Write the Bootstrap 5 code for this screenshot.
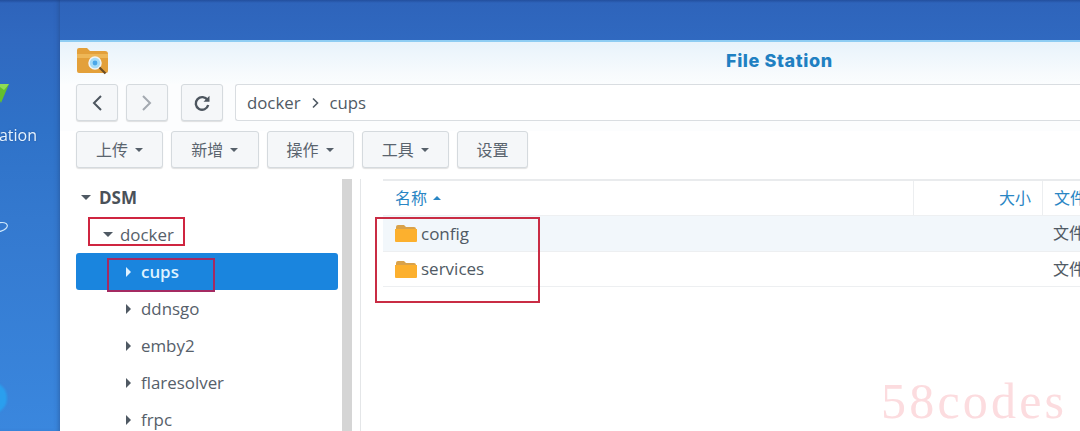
<!DOCTYPE html>
<html lang="zh">
<head>
<meta charset="utf-8">
<title>File Station</title>
<link href="https://cdn.jsdelivr.net/npm/bootstrap@5.3.0/dist/css/bootstrap.min.css" rel="stylesheet">
<style>
html,body{height:431px;overflow:hidden}
body{position:relative;background:linear-gradient(180deg,#234f9e 0,#2e64bb 3px,#3069c0 40px,#2f72c8 130px,#3479cf 220px,#3a87de 100%);font-family:"Open Sans","Noto Sans CJK SC",sans-serif;color:#4f5963;font-size:17px}
.soft-edge{filter:blur(.35px)}
.desk-strip{width:60px;flex:none;position:relative;overflow:hidden;box-shadow:inset -4px 0 5px -3px rgba(30,60,110,.45)}
.desk-label{position:absolute;right:23px;top:125px;color:#e6f3ff;font-size:16px;line-height:20px;white-space:nowrap;text-shadow:0 0 2px #1e4f96}
.desk-gem{position:absolute;left:-8px;top:81px}
.desk-oval{position:absolute;left:-8px;top:221px}
.desk-ball{position:absolute;left:-19px;top:383px;width:26px;height:30px;border-radius:50%;background:#2a9fee;filter:blur(1px)}
.win{margin-top:40px;flex:1;height:391px;background:#fff;border-top:2px solid #8fcdf3;overflow:hidden;min-width:0}
.win-top{height:42px;background:linear-gradient(180deg,#e8f3fb,#f6fafd 70%,#fbfdfe);padding:5px 0 0 16px;position:relative}
.win-title{position:absolute;left:666px;top:8px;color:#1f80c2;font-weight:800;font-size:18px;line-height:22px;font-family:"Inter","Open Sans",sans-serif;letter-spacing:.6px}
.bar-one{padding:0 0 0 16px;height:47px;background:#fcfdfe}
.bar-two{padding:0 0 0 16px;height:48px;align-items:flex-start}
.tool-btn{--bs-btn-color:#5a646e;--bs-btn-bg:#f5f7f9;--bs-btn-border-color:#d5dade;--bs-btn-hover-color:#5a646e;--bs-btn-hover-bg:#f5f7f9;--bs-btn-hover-border-color:#d5dade;--bs-btn-border-radius:3px;--bs-btn-padding-x:0;--bs-btn-padding-y:0;--bs-btn-font-size:16px;height:37px;display:flex;align-items:center;justify-content:center;gap:7px;box-shadow:0 1px 1px rgba(0,0,0,.12)}
.nav-btn{width:42px}
.refresh-btn{margin-left:13px}
.w87{width:87.25px}
.w71{width:71px}
.caret-down{width:0;height:0;border-left:4px solid transparent;border-right:4px solid transparent;border-top:4px solid #56606a;flex:none}
.path-box{flex:1;height:37px;margin-left:12px;background:#fff;border:1px solid #d9dde1;border-right:0;border-radius:3px 0 0 3px;padding-left:11px;display:flex;align-items:center;gap:10px;color:#505a64;font-size:16.8px}
.split{height:252px}
.tree-pane{width:262px;margin-left:16px;flex:none}
.tree-row{height:37px;display:flex;align-items:center;color:#56606a;font-size:16.9px;border-radius:3px}
.tree-row.on{background:#1a85de;color:#dff2ff;font-weight:600}
.lvl0{padding-left:5px;gap:8px;font-weight:700;color:#4a5159;font-size:17px}
.lvl1{padding-left:27px;gap:7px}
.lvl2{padding-left:50px;gap:10px}
.arr-d{width:0;height:0;border-left:5px solid transparent;border-right:5px solid transparent;border-top:5px solid #4f5963;flex:none}
.arr-r{width:0;height:0;border-top:5px solid transparent;border-bottom:5px solid transparent;border-left:5px solid #4f5963;flex:none}
.on .arr-r{border-left-color:#dff2ff}
.scroll-rail{width:10px;margin-left:4px;height:252px;background:#d5d5d5;flex:none}
.list-pane{flex:1;margin-left:8px;border-left:1px solid #e4e6e8;padding:0 0 0 22px;min-width:0}
.list-head{height:37px;border-top:2px solid #e9ebed;border-bottom:1px solid #eef0f2;color:#2a86c4;font-size:16px;align-items:center}
.cell-name{flex:1;padding-left:12px;display:flex;align-items:center;gap:6px;min-width:0}
.cell-size{width:129px;flex:none;text-align:right;padding-right:11px;border-left:1px solid #eceef0;height:100%;display:flex;align-items:center;justify-content:flex-end}
.cell-type{width:38px;flex:none;padding-left:11px;border-left:1px solid #eceef0;height:100%;display:flex;align-items:center;white-space:nowrap;overflow:hidden}
.caret-up{width:0;height:0;border-left:4px solid transparent;border-right:4px solid transparent;border-bottom:4px solid #2a86c4}
.list-row{height:35.5px;border-bottom:1px solid #edeff1;align-items:center;color:#505a64;font-size:17px}
.list-row.tint{background:#f2f7fb}
.list-row .cell-name{gap:4px}
.list-row .cell-size,.list-row .cell-type{border-left:0}
.list-row .cell-type{font-size:16px}
.mark-box{position:absolute;border:2px solid #cf2540;pointer-events:none}
.mb-a{left:88px;top:217px;width:97px;height:29px}
.mb-b{left:107px;top:258px;width:108px;height:34px;border-color:#a42a62}
.mb-c{left:375px;top:217px;width:165px;height:86px;border-color:#c92c44}
.stamp{position:absolute;left:881px;top:371px;font-family:"Liberation Serif",serif;font-size:50px;line-height:60px;letter-spacing:3.2px;color:#fcdcdf;white-space:nowrap}
</style>
</head>
<body>
<div class="d-flex soft-edge">
  <div class="desk-strip">
    <svg class="desk-gem" width="18" height="24" viewBox="0 0 18 24"><path d="M0 3h17l-8 19z" fill="#63bf2e"/><path d="M4 3h13l-5 6z" fill="#8fdc55"/></svg>
    <div class="desk-label">ation</div>
    <svg class="desk-oval" width="17" height="12" viewBox="0 0 17 12"><ellipse cx="8" cy="6" rx="7.5" ry="4.2" fill="none" stroke="#cfe8fb" stroke-width="1.2" transform="rotate(-15 8 6)"/></svg>
    <div class="desk-ball"></div>
  </div>
  <div class="win">
    <div class="win-top">
      <svg width="33" height="29" viewBox="0 0 33 29" class="d-block">
        <path d="M1 3q0-2 2-2h8l3 3h15q3 0 3 3v17q0 2-2 2H3q-2 0-2-2z" fill="#e3a03a"/>
        <path d="M1 7h31v4H1z" fill="#eeb757"/>
        <circle cx="19" cy="16" r="6" fill="#a5dcf7" stroke="#f1f4f5" stroke-width="1.5"/>
        <circle cx="19" cy="16" r="2.4" fill="#4aa7e8"/>
        <path d="M23.5 20.5l6 6" stroke="#6a4a22" stroke-width="2.2"/>
      </svg>
      <div class="win-title">File Station</div>
    </div>
    <div class="bar-one d-flex">
      <button class="btn tool-btn nav-btn" type="button" aria-label="back"><svg width="12" height="18" viewBox="0 0 12 18"><path d="M10 2L3 9l7 7" fill="none" stroke="#4d565f" stroke-width="2"/></svg></button>
      <button class="btn tool-btn nav-btn ms-2" type="button" aria-label="forward"><svg width="12" height="18" viewBox="0 0 12 18"><path d="M2 2l7 7-7 7" fill="none" stroke="#a3a9b0" stroke-width="2"/></svg></button>
      <button class="btn tool-btn nav-btn refresh-btn" type="button" aria-label="refresh"><svg width="18" height="18" viewBox="0 0 18 18"><path d="M14.5 6.2A6.3 6.3 0 1 0 15.2 11" fill="none" stroke="#4d565f" stroke-width="2.4"/><path d="M16.5 1.8v6h-6z" fill="#4d565f"/></svg></button>
      <div class="path-box"><span>docker</span><svg width="9" height="12" viewBox="0 0 9 12"><path d="M2 1.5L6.5 6 2 10.5" fill="none" stroke="#505a64" stroke-width="1.6"/></svg><span>cups</span></div>
    </div>
    <div class="bar-two d-flex gap-2">
      <button class="btn tool-btn w87" type="button">上传<i class="caret-down"></i></button>
      <button class="btn tool-btn w87" type="button">新增<i class="caret-down"></i></button>
      <button class="btn tool-btn w87" type="button">操作<i class="caret-down"></i></button>
      <button class="btn tool-btn w87" type="button">工具<i class="caret-down"></i></button>
      <button class="btn tool-btn w71" type="button">设置</button>
    </div>
    <div class="split d-flex">
      <div class="tree-pane">
        <div class="tree-row lvl0"><i class="arr-d"></i>DSM</div>
        <div class="tree-row lvl1"><i class="arr-d"></i>docker</div>
        <div class="tree-row lvl2 on"><i class="arr-r"></i>cups</div>
        <div class="tree-row lvl2"><i class="arr-r"></i>ddnsgo</div>
        <div class="tree-row lvl2"><i class="arr-r"></i>emby2</div>
        <div class="tree-row lvl2"><i class="arr-r"></i>flaresolver</div>
        <div class="tree-row lvl2"><i class="arr-r"></i>frpc</div>
      </div>
      <div class="scroll-rail"></div>
      <div class="list-pane">
        <div class="list-head d-flex">
          <div class="cell-name">名称<i class="caret-up"></i></div>
          <div class="cell-size">大小</div>
          <div class="cell-type">文件夹</div>
        </div>
        <div class="list-row tint d-flex">
          <div class="cell-name"><svg width="22" height="18" viewBox="0 0 22 18"><path d="M1 3q0-2 2-2h6l2 2h8q2 0 2 2H1z" fill="#d9a24a"/><path d="M0 5h22v12q0 1-1 1H1q-1 0-1-1z" fill="#fcb02e"/></svg>config</div>
          <div class="cell-size"></div>
          <div class="cell-type">文件夹</div>
        </div>
        <div class="list-row d-flex">
          <div class="cell-name"><svg width="22" height="18" viewBox="0 0 22 18"><path d="M1 3q0-2 2-2h6l2 2h8q2 0 2 2H1z" fill="#d9a24a"/><path d="M0 5h22v12q0 1-1 1H1q-1 0-1-1z" fill="#fcb02e"/></svg>services</div>
          <div class="cell-size"></div>
          <div class="cell-type">文件夹</div>
        </div>
      </div>
    </div>
  </div>
</div>
<div class="mark-box mb-a"></div>
<div class="mark-box mb-b"></div>
<div class="mark-box mb-c"></div>
<div class="stamp">58codes</div>
</body>
</html>
